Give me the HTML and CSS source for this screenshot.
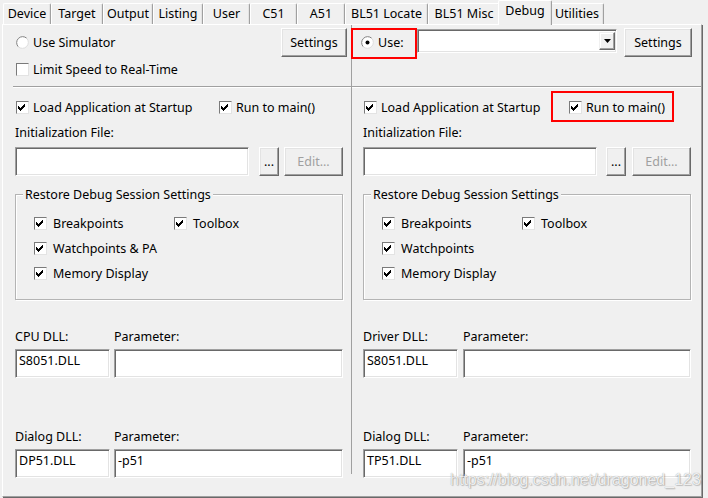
FILE: index.html
```html
<!DOCTYPE html>
<html>
<head>
<meta charset="utf-8">
<title>Options for Target - Debug</title>
<link rel="stylesheet" href="styles.css">
</head>
<body>
<div class="tabs">
  <div class="tab w-device">Device</div>
  <div class="tab w-target">Target</div>
  <div class="tab w-output">Output</div>
  <div class="tab w-listing">Listing</div>
  <div class="tab w-user">User</div>
  <div class="tab w-c51">C51</div>
  <div class="tab w-a51">A51</div>
  <div class="tab w-locate">BL51 Locate</div>
  <div class="tab w-misc">BL51 Misc</div>
  <div class="tab tab-active">Debug</div>
  <div class="tab w-util">Utilities</div>
</div>

<div class="panel">
  <!-- LEFT: Simulator -->
  <div class="col">
    <div class="top top-left">
      <div class="row row-main">
        <label class="opt">
          <span class="radio"><svg width="13" height="13" viewBox="0 0 13 13"><circle cx="6.5" cy="6.5" r="6" fill="#fff"/><path d="M2.26 10.74A6 6 0 0 1 10.74 2.26" fill="none" stroke="#808080"/><path d="M10.74 2.26A6 6 0 0 1 2.26 10.74" fill="none" stroke="#dcdcdc"/></svg></span>Use Simulator
        </label>
        <button class="btn btn-settings">Settings</button>
      </div>
      <div class="row row-sub">
        <label class="opt"><span class="cb"></span>Limit Speed to Real-Time</label>
      </div>
    </div>
    <div class="body body-left">
      <div class="row row-load">
        <label class="opt opt-first"><span class="cb"><svg width="11" height="11" viewBox="0 0 11 11"><path d="M1 4H2V5H3V6H4V5H5V4H6V3H7V2H8V5H7V6H6V7H5V8H4V9H3V8H2V7H1Z"/></svg></span>Load Application at Startup</label>
        <label class="opt"><span class="cb"><svg width="11" height="11" viewBox="0 0 11 11"><path d="M1 4H2V5H3V6H4V5H5V4H6V3H7V2H8V5H7V6H6V7H5V8H4V9H3V8H2V7H1Z"/></svg></span>Run to main()</label>
      </div>
      <div class="lbl lbl-init">Initialization File:</div>
      <div class="file-row">
        <div class="field file-field"></div>
        <button class="btn btn-dots">...</button>
        <button class="btn btn-edit" disabled>Edit...</button>
      </div>
      <div class="group">
        <div class="group-title">Restore Debug Session Settings</div>
        <div class="group-items">
          <label class="opt"><span class="cb"><svg width="11" height="11" viewBox="0 0 11 11"><path d="M1 4H2V5H3V6H4V5H5V4H6V3H7V2H8V5H7V6H6V7H5V8H4V9H3V8H2V7H1Z"/></svg></span>Breakpoints</label>
          <label class="opt"><span class="cb"><svg width="11" height="11" viewBox="0 0 11 11"><path d="M1 4H2V5H3V6H4V5H5V4H6V3H7V2H8V5H7V6H6V7H5V8H4V9H3V8H2V7H1Z"/></svg></span>Toolbox</label>
          <label class="opt span2"><span class="cb"><svg width="11" height="11" viewBox="0 0 11 11"><path d="M1 4H2V5H3V6H4V5H5V4H6V3H7V2H8V5H7V6H6V7H5V8H4V9H3V8H2V7H1Z"/></svg></span>Watchpoints &amp; PA</label>
          <label class="opt span2"><span class="cb"><svg width="11" height="11" viewBox="0 0 11 11"><path d="M1 4H2V5H3V6H4V5H5V4H6V3H7V2H8V5H7V6H6V7H5V8H4V9H3V8H2V7H1Z"/></svg></span>Memory Display</label>
        </div>
      </div>
      <div class="dll dll-first">
        <div class="lbl">CPU DLL:</div>
        <div class="lbl">Parameter:</div>
        <div class="field">S8051.DLL</div>
        <div class="field"></div>
      </div>
      <div class="dll dll-second">
        <div class="lbl">Dialog DLL:</div>
        <div class="lbl">Parameter:</div>
        <div class="field">DP51.DLL</div>
        <div class="field">-p51</div>
      </div>
    </div>
  </div>

  <div class="divider"></div>

  <!-- RIGHT: Target driver -->
  <div class="col">
    <div class="top top-right">
      <div class="row row-main row-rel">
        <label class="opt opt-use">
          <span class="radio"><svg width="13" height="13" viewBox="0 0 13 13"><circle cx="6.5" cy="6.5" r="6" fill="#fff"/><path d="M2.26 10.74A6 6 0 0 1 10.74 2.26" fill="none" stroke="#808080"/><path d="M10.74 2.26A6 6 0 0 1 2.26 10.74" fill="none" stroke="#dcdcdc"/><circle cx="6.5" cy="6.5" r="2" fill="#000"/></svg></span>Use:
        </label>
        <div class="combo">
          <div class="combo-btn"><svg width="7" height="4" viewBox="0 0 7 4"><path d="M0 0H7L3.5 4Z" fill="#000"/></svg></div>
        </div>
        <button class="btn btn-settings btn-settings-r">Settings</button>
        <span class="mark mark-use"></span>
      </div>
      <div class="row row-sub"></div>
    </div>
    <div class="body body-right">
      <div class="row row-load row-rel">
        <label class="opt opt-first"><span class="cb"><svg width="11" height="11" viewBox="0 0 11 11"><path d="M1 4H2V5H3V6H4V5H5V4H6V3H7V2H8V5H7V6H6V7H5V8H4V9H3V8H2V7H1Z"/></svg></span>Load Application at Startup</label>
        <label class="opt opt-run-r"><span class="cb"><svg width="11" height="11" viewBox="0 0 11 11"><path d="M1 4H2V5H3V6H4V5H5V4H6V3H7V2H8V5H7V6H6V7H5V8H4V9H3V8H2V7H1Z"/></svg></span>Run to main()</label>
        <span class="mark mark-run"></span>
      </div>
      <div class="lbl lbl-init">Initialization File:</div>
      <div class="file-row file-row-r">
        <div class="field file-field"></div>
        <button class="btn btn-dots">...</button>
        <button class="btn btn-edit" disabled>Edit...</button>
      </div>
      <div class="group">
        <div class="group-title">Restore Debug Session Settings</div>
        <div class="group-items">
          <label class="opt"><span class="cb"><svg width="11" height="11" viewBox="0 0 11 11"><path d="M1 4H2V5H3V6H4V5H5V4H6V3H7V2H8V5H7V6H6V7H5V8H4V9H3V8H2V7H1Z"/></svg></span>Breakpoints</label>
          <label class="opt"><span class="cb"><svg width="11" height="11" viewBox="0 0 11 11"><path d="M1 4H2V5H3V6H4V5H5V4H6V3H7V2H8V5H7V6H6V7H5V8H4V9H3V8H2V7H1Z"/></svg></span>Toolbox</label>
          <label class="opt span2"><span class="cb"><svg width="11" height="11" viewBox="0 0 11 11"><path d="M1 4H2V5H3V6H4V5H5V4H6V3H7V2H8V5H7V6H6V7H5V8H4V9H3V8H2V7H1Z"/></svg></span>Watchpoints</label>
          <label class="opt span2"><span class="cb"><svg width="11" height="11" viewBox="0 0 11 11"><path d="M1 4H2V5H3V6H4V5H5V4H6V3H7V2H8V5H7V6H6V7H5V8H4V9H3V8H2V7H1Z"/></svg></span>Memory Display</label>
        </div>
      </div>
      <div class="dll dll-first dll-r">
        <div class="lbl">Driver DLL:</div>
        <div class="lbl">Parameter:</div>
        <div class="field">S8051.DLL</div>
        <div class="field"></div>
      </div>
      <div class="dll dll-second dll-r">
        <div class="lbl">Dialog DLL:</div>
        <div class="lbl">Parameter:</div>
        <div class="field">TP51.DLL</div>
        <div class="field">-p51</div>
      </div>
    </div>
  </div>
</div>

<div class="watermark">https://blog.csdn.net/dragoned_123</div>
</body>
</html>
```

FILE: styles.css
```css
* { box-sizing: border-box; }
html, body { margin: 0; padding: 0; }
body {
  width: 708px;
  height: 498px;
  overflow: hidden;
  position: relative;
  background: #f0f0f0;
  color: #000;
  font-family: "Noto Sans", "Liberation Sans", sans-serif;
  font-size: 12.5px;
  line-height: 17px;
}

/* ---------- tabs ---------- */
.tabs {
  display: flex;
  align-items: flex-end;
  height: 24px;
  padding-left: 3px;
  position: relative;
  z-index: 2;
}
.tab {
  height: 21px;
  border-top: 1px solid #fff;
  border-left: 1px solid #fff;
  border-right: 1px solid #a0a0a0;
  box-shadow: inset -1px 0 0 #e3e3e3;
  border-radius: 2px 2px 0 0;
  text-align: center;
  line-height: 19px;
  white-space: nowrap;
  background: #f0f0f0;
}
.w-device { width: 48px; }
.w-target { width: 52px; }
.w-output { width: 50px; }
.w-listing { width: 50px; }
.w-user { width: 47px; }
.w-c51 { width: 47px; }
.w-a51 { width: 48px; }
.w-locate { width: 83px; }
.w-misc { width: 72px; }
.w-util { width: 54px; }
.tab-active {
  width: 54px;
  height: 25px;
  margin: 0 -2px -1px -2px;
  line-height: 20px;
  position: relative;
  z-index: 3;
}

/* ---------- panel ---------- */
.panel {
  margin-left: 2px;
  width: 700px;
  height: 473px;
  border: 1px solid;
  border-color: #fff #a0a0a0 #a0a0a0 #fff;
  box-shadow: 1px 1px 0 #696969;
  display: grid;
  grid-template-columns: 348px 1px 349px;
  align-items: start;
}
.divider {
  width: 1px;
  height: 449px;
  background: #a0a0a0;
}
.col { display: flex; flex-direction: column; }

.top {
  border-bottom: 1px solid #a0a0a0;
  box-shadow: 0 1px 0 #fff;
}
.top-left { margin-left: 10px; padding: 3px 4px 5px 3px; }
.top-right { padding: 3px 9px 5px 9px; }

.row { display: flex; align-items: center; }
.row-main { height: 29px; justify-content: space-between; }
.row-sub { height: 24px; }
.row-rel { position: relative; }

.opt { display: flex; align-items: center; white-space: nowrap; }
.radio { width: 13px; height: 13px; margin-right: 4px; flex: none; display: block; }
.radio svg { display: block; }
.cb {
  width: 13px;
  height: 13px;
  margin-right: 4px;
  flex: none;
  background: #fff;
  border: 1px solid;
  border-color: #7a7a7a #e3e3e3 #e3e3e3 #7a7a7a;
}
.cb svg { display: block; fill: #000; }
.group-items .cb { margin-right: 6px; }

.opt-use { width: 56px; justify-content: flex-start; }

.btn {
  font: inherit;
  color: #000;
  background: #f0f0f0;
  border: 1px solid;
  border-color: #fff #696969 #696969 #fff;
  box-shadow: inset -1px -1px 0 #a0a0a0, inset 1px 1px 0 #e3e3e3;
  padding: 0;
  height: 29px;
  border-radius: 0;
}
.btn-settings { width: 66px; }
.btn-settings-r { width: 68px; }
.btn-dots { width: 20px; margin-left: 10px; }
.btn-edit { width: 59px; margin-left: 5px; color: #a0a0a0; }

.combo {
  width: 200px;
  height: 24px;
  align-self: flex-start;
  margin-top: 1px;
  margin-right: 7px;
  background: #fff;
  border: 1px solid;
  border-color: #a0a0a0 #fff #fff #a0a0a0;
  box-shadow: inset 1px 1px 0 #696969, inset -1px -1px 0 #e3e3e3;
  padding: 2px;
  display: flex;
  justify-content: flex-end;
}
.combo-btn {
  width: 16px;
  height: 100%;
  margin-right: -1px;
  background: #f0f0f0;
  border: 1px solid;
  border-color: #f0f0f0 #696969 #696969 #f0f0f0;
  box-shadow: inset -1px -1px 0 #a0a0a0, inset 1px 1px 0 #fff;
  display: flex;
  align-items: center;
  justify-content: center;
}
.combo-btn svg { display: block; }

.mark {
  position: absolute;
  border: 2px solid #f00;
  pointer-events: none;
}
.mark-use { left: -10px; top: 0; width: 66px; height: 31px; }
.mark-run { left: 188px; top: -5px; width: 123px; height: 31px; }

/* ---------- body ---------- */
.body-left { padding: 0 8px 0 12px; }
.body-right { padding: 0 10px 0 11px; }

.row-load { margin-top: 9px; height: 23px; padding-left: 1px; }
.opt-first { width: 203px; }
.opt-run-r { margin-left: 2px; }

.lbl { height: 17px; white-space: nowrap; }
.lbl-init { margin-top: 5px; }

.file-row { display: flex; margin-top: 6px; height: 29px; }
.file-field { width: 234px; }
.file-row-r .btn-dots { margin-left: 9px; }
.file-row-r .btn-edit { margin-left: 6px; }

.field {
  height: 29px;
  background: #fff;
  border: 1px solid;
  border-color: #a0a0a0 #fff #fff #a0a0a0;
  box-shadow: inset 1px 1px 0 #696969, inset -1px -1px 0 #e3e3e3;
  padding: 2px 3px;
  white-space: nowrap;
}

.group {
  margin-top: 18px;
  border: 1px solid #b4b4b4;
  box-shadow: inset 1px 1px 0 #fff, 1px 1px 0 #fff;
}
.group-title {
  display: table;
  margin: -9px 0 0 7px;
  padding: 0 2px;
  background: #f0f0f0;
  height: 17px;
  white-space: nowrap;
}
.group-items {
  display: grid;
  grid-template-columns: 140px 1fr;
  grid-auto-rows: 25px;
  margin-top: 8px;
  padding: 0 0 13px 18px;
}
.group-items .opt { height: 25px; }
.span2 { grid-column: 1 / 3; }

.dll {
  display: grid;
  grid-template-columns: 95px 1fr;
  grid-template-rows: 17px 29px;
  column-gap: 4px;
  row-gap: 4px;
}
.dll-r { column-gap: 5px; }
.dll-first { margin-top: 28px; }
.dll-second { margin-top: 50px; }

/* ---------- watermark overlay ---------- */
.watermark {
  position: absolute;
  left: 450px;
  top: 471px;
  font-family: "Liberation Sans", Arial, sans-serif;
  font-size: 16px;
  line-height: 18px;
  color: rgba(255, 255, 255, 0.85);
  text-shadow: 0 0 1px rgba(0, 0, 0, 0.4), 1px 1px 1px rgba(0, 0, 0, 0.18);
  white-space: nowrap;
  pointer-events: none;
}
```
